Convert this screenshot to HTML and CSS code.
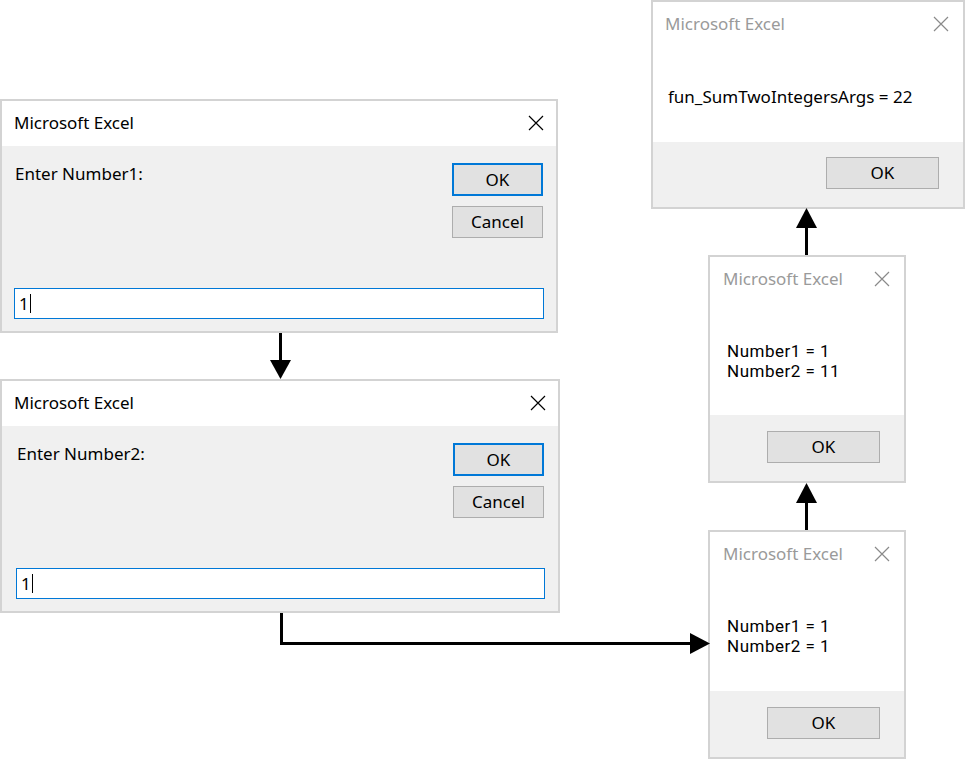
FILE: index.html
```html
<!DOCTYPE html>
<html>
<head>
<meta charset="utf-8">
<link rel="stylesheet" href="styles.css">
</head>
<body>
<div class="canvas">

  <div class="dlg input-dlg d1">
    <div class="titlebar">
      <span class="title">Microsoft Excel</span>
      <svg class="close" viewBox="0 0 16 16"><path d="M1 1 L15 15 M15 1 L1 15"/></svg>
    </div>
    <div class="ibody">
      <div class="prompt-row">
        <div class="prompt">Enter Number1:</div>
        <div class="btns">
          <div class="btn default">OK</div>
          <div class="btn">Cancel</div>
        </div>
      </div>
      <div class="field">1<span class="caret"></span></div>
    </div>
  </div>

  <div class="dlg input-dlg d2">
    <div class="titlebar">
      <span class="title">Microsoft Excel</span>
      <svg class="close" viewBox="0 0 16 16"><path d="M1 1 L15 15 M15 1 L1 15"/></svg>
    </div>
    <div class="ibody">
      <div class="prompt-row">
        <div class="prompt">Enter Number2:</div>
        <div class="btns">
          <div class="btn default">OK</div>
          <div class="btn">Cancel</div>
        </div>
      </div>
      <div class="field">1<span class="caret"></span></div>
    </div>
  </div>

  <div class="dlg msg-dlg d3">
    <div class="titlebar">
      <span class="title">Microsoft Excel</span>
      <svg class="close" viewBox="0 0 16 16"><path d="M1 1 L15 15 M15 1 L1 15"/></svg>
    </div>
    <div class="msg">
      <p class="msg-text">Number1 = 1<br>Number2 = 1</p>
    </div>
    <div class="footer"><div class="btn wide">OK</div></div>
  </div>

  <div class="dlg msg-dlg d4">
    <div class="titlebar">
      <span class="title">Microsoft Excel</span>
      <svg class="close" viewBox="0 0 16 16"><path d="M1 1 L15 15 M15 1 L1 15"/></svg>
    </div>
    <div class="msg">
      <p class="msg-text">Number1 = 1<br>Number2 = 11</p>
    </div>
    <div class="footer"><div class="btn wide">OK</div></div>
  </div>

  <div class="dlg msg-dlg d5">
    <div class="titlebar">
      <span class="title">Microsoft Excel</span>
      <svg class="close" viewBox="0 0 16 16"><path d="M1 1 L15 15 M15 1 L1 15"/></svg>
    </div>
    <div class="msg">
      <p class="msg-text single">fun_SumTwoIntegersArgs = 22</p>
    </div>
    <div class="footer"><div class="btn wide">OK</div></div>
  </div>

  <svg class="arrows" width="965" height="759" viewBox="0 0 965 759">
    <g fill="none" stroke="#000" stroke-width="3">
      <path d="M280.5 333 V362"/>
      <path d="M281.5 613 V643.5 H692"/>
      <path d="M806.5 530 V500"/>
      <path d="M806.5 255 V225"/>
    </g>
    <g fill="#000">
      <polygon points="270,360 291,360 280.5,379"/>
      <polygon points="690,633 690,654 710,643.5"/>
      <polygon points="796,503 817,503 806.5,483"/>
      <polygon points="796,228 817,228 806.5,208"/>
    </g>
  </svg>
</div>
</body>
</html>
```

FILE: styles.css
```css
* { box-sizing: border-box; }

html, body {
  margin: 0;
  padding: 0;
  background: #fff;
}

body {
  font-family: "Noto Sans", "Open Sans", "DejaVu Sans", sans-serif;
  font-size: 17px;
  color: #000;
}

.canvas {
  position: relative;
  width: 965px;
  height: 759px;
  overflow: hidden;
}

.dlg {
  position: absolute;
  border: 2px solid #d3d3d3;
  background: #f0f0f0;
  display: flex;
  flex-direction: column;
}

.titlebar {
  height: 45px;
  flex: none;
  background: #fff;
  display: flex;
  align-items: center;
  justify-content: space-between;
  padding: 0 12px 2px 12px;
}

.title {
  line-height: 20px;
}

.close {
  width: 16px;
  height: 16px;
  stroke: #000;
  stroke-width: 1.2;
  fill: none;
}

/* input dialogs */
.d1 { left: 0; top: 99px; width: 558px; height: 234px; }
.d2 { left: 0; top: 379px; width: 560px; height: 234px; }

.ibody {
  flex: 1;
  display: flex;
  flex-direction: column;
  justify-content: space-between;
  padding: 17px 12px 12px 12px;
}

.d2 .ibody { padding-left: 14px; padding-right: 13px; }

.prompt-row {
  display: flex;
  justify-content: space-between;
  align-items: flex-start;
}

.prompt {
  margin-left: 1px;
  margin-top: 1px;
  line-height: 20px;
}

.btns {
  display: flex;
  flex-direction: column;
  gap: 10px;
  margin-right: 1px;
}

.btn {
  width: 91px;
  height: 32px;
  border: 1px solid #adadad;
  background: #e1e1e1;
  display: flex;
  align-items: center;
  justify-content: center;
  line-height: 20px;
}

.btn.default {
  height: 33px;
  border: 2px solid #0078d7;
}

.field {
  height: 31px;
  background: #fff;
  border: 1px solid #0078d7;
  display: flex;
  align-items: center;
  padding-left: 4px;
  line-height: 20px;
}

.caret {
  display: inline-block;
  width: 0;
  height: 19px;
  border-left: 1.5px solid #000;
  margin-left: 1px;
}

/* message dialogs */
.msg-dlg .titlebar {
  padding-left: 13px;
  padding-right: 14px;
}

.msg-dlg .title { color: #9a9a9a; }

.msg-dlg .close {
  stroke: #8a8a8a;
  width: 16px;
  height: 16px;
}

.msg-dlg .msg {
  flex: 1;
  background: #fff;
  padding: 39px 0 0 17px;
}

.msg-text {
  margin: 0;
  font-family: Roboto, "Noto Sans", sans-serif;
  font-size: 17px;
  letter-spacing: 0.5px;
  line-height: 20px;
}

.msg-text.single {
  font-family: "Noto Sans", "Open Sans", sans-serif;
  letter-spacing: 0;
}

.footer {
  flex: none;
  height: 66px;
  display: flex;
  justify-content: flex-end;
  align-items: flex-start;
  padding: 16px 24px 0 0;
}

.btn.wide {
  width: 113px;
  height: 32px;
}

.d3 { left: 708px; top: 530px; width: 198px; height: 229px; }
.d4 { left: 708px; top: 255px; width: 198px; height: 228px; }
.d5 { left: 651px; top: 0; width: 314px; height: 209px; }

.d5 .titlebar { padding-left: 12px; padding-right: 14px; }
.d5 .msg { padding-top: 40px; padding-left: 15px; }
.d5 .footer { height: 65px; padding-top: 15px; }

.arrows {
  position: absolute;
  left: 0;
  top: 0;
  pointer-events: none;
}
```
